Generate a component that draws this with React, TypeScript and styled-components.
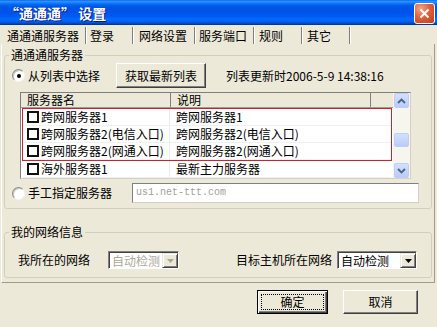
import React from "react";
import styled, { createGlobalStyle } from "styled-components";

const GlobalStyle = createGlobalStyle`
  html, body {
    margin: 0;
    padding: 0;
    background: #ece9d8;
  }
  body {
    font-family: "Noto Sans CJK SC", "Liberation Sans", sans-serif;
    font-size: 12px;
    color: #000;
  }
  * {
    box-sizing: border-box;
  }
`;

type Server = {
  name: string;
  note: string;
};

const marked: Server[] = [
  { name: "跨网服务器1", note: "跨网服务器1" },
  { name: "跨网服务器2(电信入口)", note: "跨网服务器2(电信入口)" },
  { name: "跨网服务器2(网通入口)", note: "跨网服务器2(网通入口)" },
];

const others: Server[] = [{ name: "海外服务器1", note: "最新主力服务器" }];

const tabs = [
  { label: "通通通服务器", width: 83, pad: 4 },
  { label: "登录", width: 47, pad: 4 },
  { label: "网络设置", width: 62, pad: 6 },
  { label: "服务端口", width: 59, pad: 4 },
  { label: "规则", width: 48, pad: 5 },
  { label: "其它", width: 48, pad: 5 },
];

const Chevron = ({ up }: { up?: boolean }) => (
  <svg width="9" height="6" viewBox="0 0 9 6">
    <path
      d={up ? "M1 5 L4.5 1.5 L8 5" : "M1 1 L4.5 4.5 L8 1"}
      fill="none"
      stroke="#4d6185"
      strokeWidth="1.8"
    />
  </svg>
);

const ServerRows = ({ items, isMarked }: { items: Server[]; isMarked?: boolean }) => (
  <RowGroup $marked={isMarked}>
    {items.map((s) => (
      <Row key={s.name}>
        <NameCell>
          <CheckBox />
          <CellText>{s.name}</CellText>
        </NameCell>
        <NoteCell>{s.note}</NoteCell>
      </Row>
    ))}
  </RowGroup>
);

const Combo = ({ value, width, disabled }: { value: string; width: number; disabled?: boolean }) => (
  <ComboBox $width={width}>
    <ComboText $disabled={disabled}>{value}</ComboText>
    <ComboArrow>
      <svg width="7" height="4" viewBox="0 0 7 4">
        <path d="M0 0 H7 L3.5 4 Z" fill={disabled ? "#aca899" : "#000"} />
      </svg>
    </ComboArrow>
  </ComboBox>
);

const App = () => {
  return (
    <Window>
      <GlobalStyle />
      <TitleBar>
        <Title>“通通通” 设置</Title>
        <CloseButton>
          <svg width="11" height="11" viewBox="0 0 11 11">
            <path d="M1.5 1.5 L9.5 9.5 M9.5 1.5 L1.5 9.5" stroke="#fff" strokeWidth="2" />
          </svg>
        </CloseButton>
      </TitleBar>

      <TabStrip>
        {tabs.map((t) => (
          <Tab key={t.label} $width={t.width} $pad={t.pad}>
            {t.label}
          </Tab>
        ))}
      </TabStrip>

      <Panel>
        <GroupBox>
          <Legend>通通通服务器</Legend>
          <GroupBody>
            <OptionRow>
              <Radio $checked />
              <Label>从列表中选择</Label>
              <Button $width={90} $height={25} $gap={16}>
                获取最新列表
              </Button>
              <UpdateText>列表更新时2006-5-9 14:38:16</UpdateText>
            </OptionRow>

            <ListView>
              <ListBody>
                <ListHeader>
                  <HeaderCell $width={150}>服务器名</HeaderCell>
                  <HeaderCell $width={200}>说明</HeaderCell>
                  <HeaderFill />
                </ListHeader>
                <ServerRows items={marked} isMarked />
                <ServerRows items={others} />
              </ListBody>
              <ScrollBar>
                <ScrollButton>
                  <Chevron up />
                </ScrollButton>
                <Thumb />
                <ScrollTrack />
                <ScrollButton>
                  <Chevron />
                </ScrollButton>
              </ScrollBar>
            </ListView>

            <OptionRow>
              <Radio />
              <Label>手工指定服务器</Label>
              <AddressField>us1.net-ttt.com</AddressField>
            </OptionRow>
          </GroupBody>
        </GroupBox>

        <NetGroup>
          <Legend>我的网络信息</Legend>
          <NetRow>
            <NetField $gap={18}>
              <span>我所在的网络</span>
              <Combo value="自动检测" width={71} disabled />
            </NetField>
            <NetField $gap={5}>
              <span>目标主机所在网络</span>
              <Combo value="自动检测" width={80} />
            </NetField>
          </NetRow>
        </NetGroup>
      </Panel>

      <ButtonRow>
        <Button $width={71} $height={24} $default>
          确定
        </Button>
        <Button $width={75} $height={24}>
          取消
        </Button>
      </ButtonRow>
    </Window>
  );
};

const Window = styled.div`
  width: 437px;
  height: 327px;
  display: flex;
  flex-direction: column;
  background: #ece9d8;
  overflow: hidden;
`;

const TitleBar = styled.div`
  height: 25px;
  flex: none;
  display: flex;
  align-items: center;
  justify-content: space-between;
  padding: 0 2px 0 5px;
  background: linear-gradient(
    to bottom,
    #0058ee 0%,
    #3593ff 4%,
    #288eff 8%,
    #127dff 12%,
    #036ffc 16%,
    #0262ee 20%,
    #0057e5 26%,
    #0054e3 32%,
    #0055eb 56%,
    #005bf5 66%,
    #026afe 76%,
    #0062ef 86%,
    #0052d6 92%,
    #0040ab 96%,
    #003092 100%
  );
`;

const Title = styled.div`
  color: #fff;
  font-weight: bold;
  font-size: 14px;
  line-height: 16px;
  text-shadow: 1px 1px 0 #0a1883;
`;

const CloseButton = styled.div`
  width: 21px;
  height: 21px;
  margin-top: 1px;
  border: 1px solid #fff;
  border-radius: 3px;
  display: flex;
  align-items: center;
  justify-content: center;
  background: radial-gradient(circle at 30% 25%, #f2a58a 0%, #e0603c 45%, #c43c16 100%);
`;

const TabStrip = styled.div`
  height: 19px;
  flex: none;
  display: flex;
  padding: 2px 0 0 3px;
`;

const Tab = styled.div<{ $width: number; $pad: number }>`
  width: ${(p) => p.$width}px;
  height: 17px;
  line-height: 17px;
  padding-left: ${(p) => p.$pad}px;
  border-right: 1px solid #7f7f7f;
  box-shadow: 1px 0 0 #fff;
  white-space: nowrap;
`;

const Panel = styled.div`
  flex: none;
  margin: 0 2px 0 1px;
  padding: 4px 2px 4px 2px;
  border-left: 1px solid #fff;
  border-right: 1px solid #9d9d92;
  border-bottom: 1px solid #9d9d92;
`;

const GroupBox = styled.fieldset`
  margin: 0;
  padding: 0;
  min-width: 0;
  border: 1px solid #d0d0bf;
  border-radius: 3px;
`;

const NetGroup = styled(GroupBox)`
  margin-top: 16px;
`;

const Legend = styled.legend`
  margin-left: 4px;
  padding: 0 2px;
  line-height: 14px;
  font-size: 12px;
`;

const GroupBody = styled.div`
  padding: 1px 0 5px;
  display: flex;
  flex-direction: column;
  gap: 4px;
`;

const OptionRow = styled.div`
  display: flex;
  align-items: center;
  padding-left: 7px;
`;

const Radio = styled.span<{ $checked?: boolean }>`
  width: 13px;
  height: 13px;
  border-radius: 50%;
  background: #fff;
  border: 1px solid;
  border-color: #8a8a8a #f4f4f4 #f4f4f4 #8a8a8a;
  box-shadow: inset 1px 1px 0 #c9c6b8;
  display: flex;
  align-items: center;
  justify-content: center;

  &::after {
    content: "";
    width: 4px;
    height: 4px;
    border-radius: 50%;
    background: ${(p) => (p.$checked ? "#000" : "transparent")};
  }
`;

const Label = styled.span`
  margin-left: 3px;
  line-height: 16px;
  white-space: nowrap;
`;

const UpdateText = styled.span`
  margin-left: 20px;
  line-height: 16px;
  white-space: nowrap;
`;

const Button = styled.button<{ $width: number; $height: number; $gap?: number; $default?: boolean }>`
  width: ${(p) => p.$width}px;
  height: ${(p) => p.$height}px;
  margin-left: ${(p) => p.$gap ?? 0}px;
  padding: 0;
  font-family: inherit;
  font-size: 12px;
  line-height: 14px;
  color: #000;
  background: #ece9d8;
  border: 1px solid;
  border-color: ${(p) => (p.$default ? "#000" : "#fff #404040 #404040 #fff")};
  box-shadow: ${(p) =>
    p.$default
      ? "inset 1px 1px 0 #fff, inset -1px -1px 0 #404040, inset -2px -2px 0 #808080"
      : "inset -1px -1px 0 #808080"};
  outline: ${(p) => (p.$default ? "1px dotted #000" : "none")};
  outline-offset: -5px;
`;

const ListView = styled.div`
  margin-left: 15px;
  width: 391px;
  height: 87px;
  display: flex;
  border: 1px solid;
  border-color: #7f7f7f #d4d0c8 #d4d0c8 #7f7f7f;
  background: #fff;
`;

const ListBody = styled.div`
  flex: 1;
  display: flex;
  flex-direction: column;
`;

const ListHeader = styled.div`
  height: 15px;
  flex: none;
  display: flex;
  background: #ece9d8;
  border-bottom: 1px solid #9d9d92;
`;

const HeaderCell = styled.div<{ $width: number }>`
  width: ${(p) => p.$width}px;
  padding-left: 6px;
  line-height: 14px;
  border-right: 1px solid #808080;
`;

const HeaderFill = styled.div`
  flex: 1;
`;

const RowGroup = styled.div<{ $marked?: boolean }>`
  margin: 0 1px;
  border: solid ${(p) => (p.$marked ? "#c4262e" : "transparent")};
  border-width: ${(p) => (p.$marked ? "1px" : "0 1px")};
`;

const Row = styled.div`
  height: 17px;
  display: flex;
  align-items: center;
  border-bottom: 1px solid #f0f0f0;
`;

const NameCell = styled.div`
  width: 147px;
  height: 100%;
  display: flex;
  align-items: center;
  padding-left: 4px;
  border-right: 1px solid #ececec;
`;

const CheckBox = styled.span`
  width: 12px;
  height: 12px;
  flex: none;
  border: 2px solid #111;
  background: #fff;
`;

const CellText = styled.span`
  margin-left: 2px;
  line-height: 16px;
  white-space: nowrap;
`;

const NoteCell = styled.div`
  flex: 1;
  padding-left: 6px;
  line-height: 16px;
  white-space: nowrap;
`;

const ScrollBar = styled.div`
  width: 17px;
  flex: none;
  display: flex;
  flex-direction: column;
  align-items: center;
  background: #f6f5ee;
`;

const ScrollButton = styled.div`
  width: 15px;
  height: 15px;
  flex: none;
  border: 1px solid #bccdf8;
  border-radius: 2px;
  background: linear-gradient(#d4e0fd, #b9cbf9);
  display: flex;
  align-items: center;
  justify-content: center;
`;

const Thumb = styled(ScrollButton)`
  margin-top: 25px;
  height: 14px;
`;

const ScrollTrack = styled.div`
  flex: 1;
`;

const AddressField = styled.div`
  margin-left: 20px;
  width: 287px;
  height: 20px;
  padding-left: 3px;
  border: 1px solid;
  border-color: #808080 #d4d0c8 #d4d0c8 #808080;
  background: #fff;
  color: #a0a0a0;
  font-family: "Liberation Mono", monospace;
  font-size: 10px;
  line-height: 18px;
`;

const NetRow = styled.div`
  display: flex;
  align-items: center;
  justify-content: space-between;
  padding: 12px 14px 8px 13px;
  line-height: 16px;
`;

const NetField = styled.div<{ $gap: number }>`
  display: flex;
  align-items: center;
  gap: ${(p) => p.$gap}px;
`;

const ComboBox = styled.div<{ $width: number }>`
  width: ${(p) => p.$width}px;
  height: 18px;
  display: flex;
  border: 1px solid;
  border-color: #808080 #fff #fff #808080;
  box-shadow: inset 1px 1px 0 #404040;
  background: #fff;
  padding: 1px 0 0 1px;
`;

const ComboText = styled.div<{ $disabled?: boolean }>`
  flex: 1;
  padding-left: 2px;
  line-height: 15px;
  color: ${(p) => (p.$disabled ? "#aca899" : "#000")};
`;

const ComboArrow = styled.div`
  width: 16px;
  display: flex;
  align-items: center;
  justify-content: center;
  background: #ece9d8;
  border: 1px solid;
  border-color: #ece9d8 #404040 #404040 #ece9d8;
  box-shadow: inset 1px 1px 0 #fff, inset -1px -1px 0 #808080;
`;

const ButtonRow = styled.div`
  display: flex;
  justify-content: flex-end;
  gap: 15px;
  padding: 7px 19px 0 0;
`;

export default App;
